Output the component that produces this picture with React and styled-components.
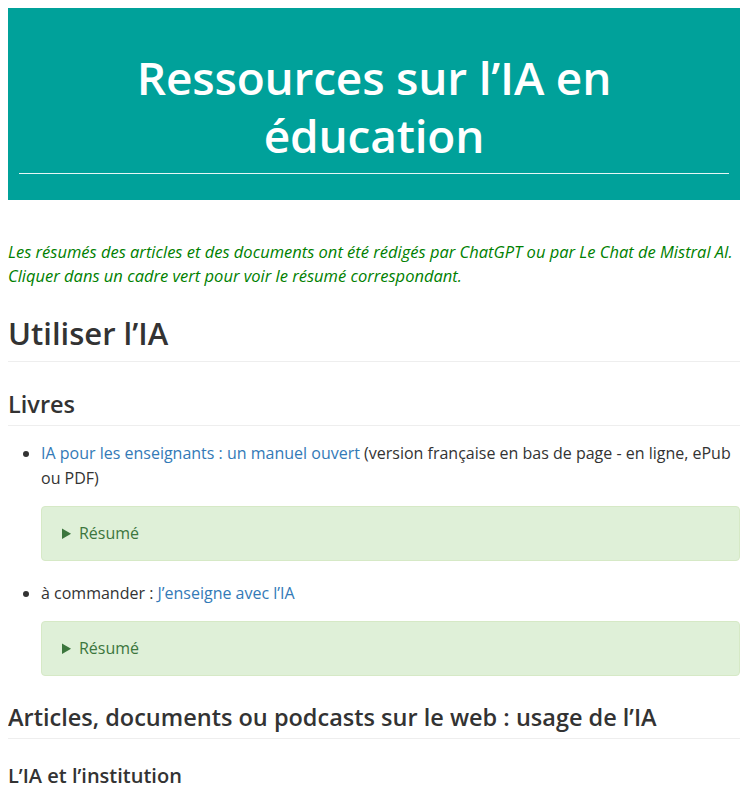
import styled, { createGlobalStyle } from "styled-components";

const GlobalStyle = createGlobalStyle`
  body {
    margin: 8px;
    font-family: "Open Sans", "Noto Sans", sans-serif;
    font-size: 16px;
    line-height: 25px;
    color: #333;
    background: #fff;
  }
`;

const Banner = styled.header`
  background: #00a19a;
  padding: 40px 11px 26px;
  margin-bottom: 40px;
`;

const Title = styled.h1`
  margin: 0;
  color: #fff;
  font-size: 46px;
  font-weight: 600;
  letter-spacing: -0.2px;
  line-height: 58px;
  text-align: center;
`;

const BannerRule = styled.hr`
  border: 0;
  border-top: 1px solid #e6f6f5;
  margin: 9px 0 0;
`;

const Note = styled.p`
  margin: 0;
  color: #008000;
  font-size: 16.5px;
  font-style: italic;
  line-height: 24px;
`;

const Heading = styled.h2`
  margin: ${({ $top }) => $top}px 0 0;
  font-size: ${({ $size }) => $size}px;
  font-weight: 600;
  line-height: ${({ $lh }) => $lh}px;
  color: #333;
  padding-bottom: ${({ $rule }) => $rule || 0}px;
  border-bottom: ${({ $rule }) => ($rule ? "1px solid #eee" : "none")};
`;

const List = styled.ul`
  margin: 15px 0 0;
  padding-left: 33px;
`;

const Item = styled.li`
  line-height: 25px;
`;

const Link = styled.a`
  color: #337ab7;
  text-decoration: none;
`;

const Summary = styled.details`
  margin: 15px 0 20px;
  padding: 14.5px 20px;
  background: #dff0d8;
  border: 1px solid #d6e9c6;
  border-radius: 4px;
  color: #3c763d;

  summary {
    cursor: pointer;
    line-height: 24px;
  }
`;

export default function App() {
  return (
    <>
      <GlobalStyle />
      <Banner>
        <Title>Ressources sur l’IA en<br />éducation</Title>
        <BannerRule />
      </Banner>
      <Note>
        Les résumés des articles et des documents ont été rédigés par ChatGPT ou par Le Chat de Mistral AI.
        <br />
        Cliquer dans un cadre vert pour voir le résumé correspondant.
      </Note>
      <Heading $size={31} $lh={37} $top={27} $rule={9}>Utiliser l’IA</Heading>
      <Heading as="h3" $size={23.5} $lh={29} $top={28} $rule={5.5}>Livres</Heading>
      <List>
        <Item>
          <Link href="#">IA pour les enseignants : un manuel ouvert</Link> (version française en bas de page - en ligne, ePub ou PDF)
          <Summary><summary>Résumé</summary></Summary>
        </Item>
        <Item>
          à commander : <Link href="#">J’enseigne avec l’IA</Link>
          <Summary><summary>Résumé</summary></Summary>
        </Item>
      </List>
      <Heading as="h3" $size={23.5} $lh={29} $top={27} $rule={6}>
        Articles, documents ou podcasts sur le web : usage de l’IA
      </Heading>
      <Heading as="h4" $size={20} $lh={24} $top={25}>L’IA et l’institution</Heading>
    </>
  );
}
